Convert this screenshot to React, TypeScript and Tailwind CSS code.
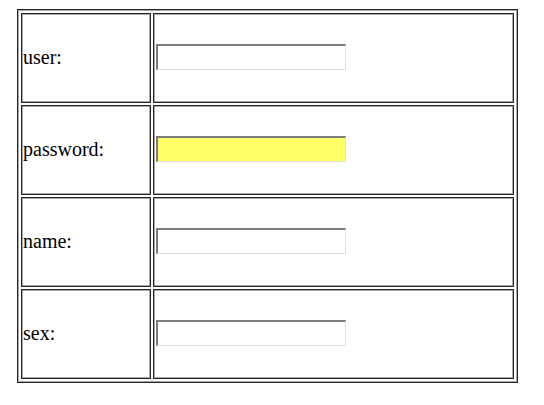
import React from "react";

const rows = [
  { label: "user:", yellow: false },
  { label: "password:", yellow: true },
  { label: "name:", yellow: false },
  { label: "sex:", yellow: false },
];

const cell =
  "h-[90px] border border-[#262626] shadow-[inset_1px_1px_0_#a8a8a8,inset_-1px_-1px_0_#a8a8a8] flex items-center";

export default function App() {
  return (
    <div className="min-h-[405px] w-[544px] bg-white pt-[9px] pl-[17px] font-['Liberation_Serif',serif] text-black">
      <div className="w-[501px] border border-[#262626] p-[3px] shadow-[inset_1px_1px_0_#a8a8a8,inset_-1px_-1px_0_#a8a8a8]">
        <div className="grid grid-cols-[130px_361px] gap-[2px]">
          {rows.map((r) => (
            <React.Fragment key={r.label}>
              <div className={cell + " pl-[1px] text-[20px] leading-none pb-[3px]"}>
                {r.label}
              </div>
              <div className={cell + " pl-[2px] pb-[2px]"}>
                <input
                  type="text"
                  className={
                    "h-[26px] w-[190px] border-t-2 border-l-2 border-r border-b border-t-[#7c7c7c] border-l-[#7c7c7c] border-r-[#e0e0e0] border-b-[#e0e0e0] outline-none " +
                    (r.yellow ? "bg-[#ffff66]" : "bg-white")
                  }
                />
              </div>
            </React.Fragment>
          ))}
        </div>
      </div>
    </div>
  );
}
